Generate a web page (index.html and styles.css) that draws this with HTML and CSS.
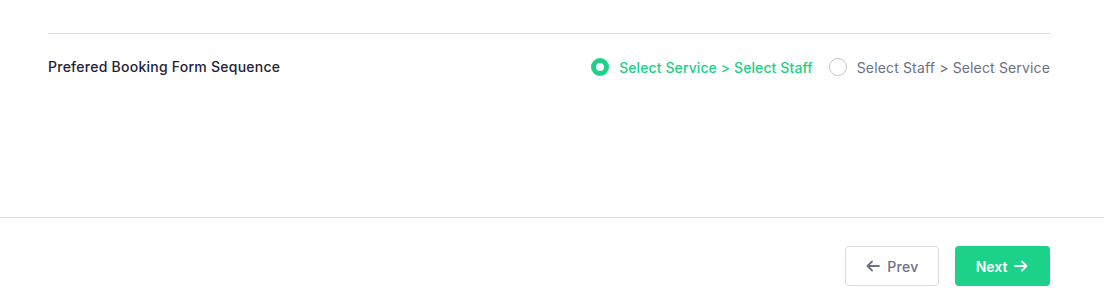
FILE: index.html
```html
<!DOCTYPE html>
<html lang="en">
<head>
    <meta charset="UTF-8">
    <title>Booking Settings</title>
    <link rel="stylesheet" href="styles.css">
</head>
<body>
    <div class="panel">
        <div class="content">
            <hr class="top-line">
            <!-- Booking sequence option -->
            <div class="setting-row">
                <div class="setting-label">Prefered Booking Form Sequence</div>
                <div class="radio-group">
                    <label class="radio-option checked">
                        <span class="radio-dot"></span>
                        Select Service &gt; Select Staff
                    </label>
                    <label class="radio-option">
                        <span class="radio-dot"></span>
                        Select Staff &gt; Select Service
                    </label>
                </div>
            </div>
        </div>
        <!-- Footer with navigation -->
        <div class="footer">
            <button class="btn btn-prev">
                <svg width="16" height="16" viewBox="0 0 16 16" fill="none" stroke="currentColor" stroke-width="1.8" stroke-linecap="round" stroke-linejoin="round"><path d="M14 8H2.5M7 3.5L2.5 8L7 12.5"/></svg>
                Prev
            </button>
            <button class="btn btn-next">
                Next
                <svg width="16" height="16" viewBox="0 0 16 16" fill="none" stroke="currentColor" stroke-width="1.8" stroke-linecap="round" stroke-linejoin="round"><path d="M2 8H13.5M9 3.5L13.5 8L9 12.5"/></svg>
            </button>
        </div>
    </div>
</body>
</html>
```

FILE: styles.css
```css
/* Page base */
body {
    margin: 0;
    font-family: "Inter", "Open Sans", sans-serif;
    background: #fff;
    width: 1104px;
    height: 305px;
}
/* Main area */
.content {
    padding: 0 54px 0 48px;
    height: 217px;
}
/* Thin divider above the settings */
.top-line {
    border: none;
    border-bottom: 1px solid #dcdcdf;
    margin: 0;
    padding-top: 33px;
    height: 0;
}
/* Setting row */
.setting-row {
    display: flex;
    align-items: center;
    justify-content: space-between;
    padding-top: 24px;
}
.setting-label {
    font-size: 14px;
    font-weight: 500;
    color: #1e2235;
    letter-spacing: 0.25px;
    margin-top: -2px;
}
.radio-group {
    display: flex;
    align-items: center;
    gap: 16px;
}
.radio-option {
    display: flex;
    align-items: center;
    gap: 10px;
    font-size: 14px;
    font-weight: 400;
    color: #6b7084;
    letter-spacing: 0.15px;
}
.radio-dot {
    width: 18px;
    height: 18px;
    box-sizing: border-box;
    border: 1px solid #c6c8cf;
    border-radius: 50%;
    background: #fff;
}
.radio-option.checked {
    color: #1dcf86;
    font-weight: 500;
    letter-spacing: 0.1px;
}
.radio-option.checked .radio-dot {
    border: 5.5px solid #1bd288;
}
/* Footer */
.footer {
    border-top: 1px solid #dcdcdf;
    display: flex;
    justify-content: flex-end;
    gap: 16px;
    padding: 28px 54px 0 0;
}
.btn {
    height: 40px;
    display: flex;
    align-items: center;
    justify-content: center;
    gap: 6px;
    border-radius: 4px;
    font-family: inherit;
    font-size: 14px;
    font-weight: 500;
    cursor: pointer;
}
.btn-prev {
    width: 94px;
    background: #fff;
    border: 1px solid #d9dbe0;
    color: #6b7084;
    letter-spacing: 0.3px;
}
.btn-next {
    width: 95px;
    background: #1bd288;
    border: none;
    color: #fff;
    font-weight: 600;
}
```
